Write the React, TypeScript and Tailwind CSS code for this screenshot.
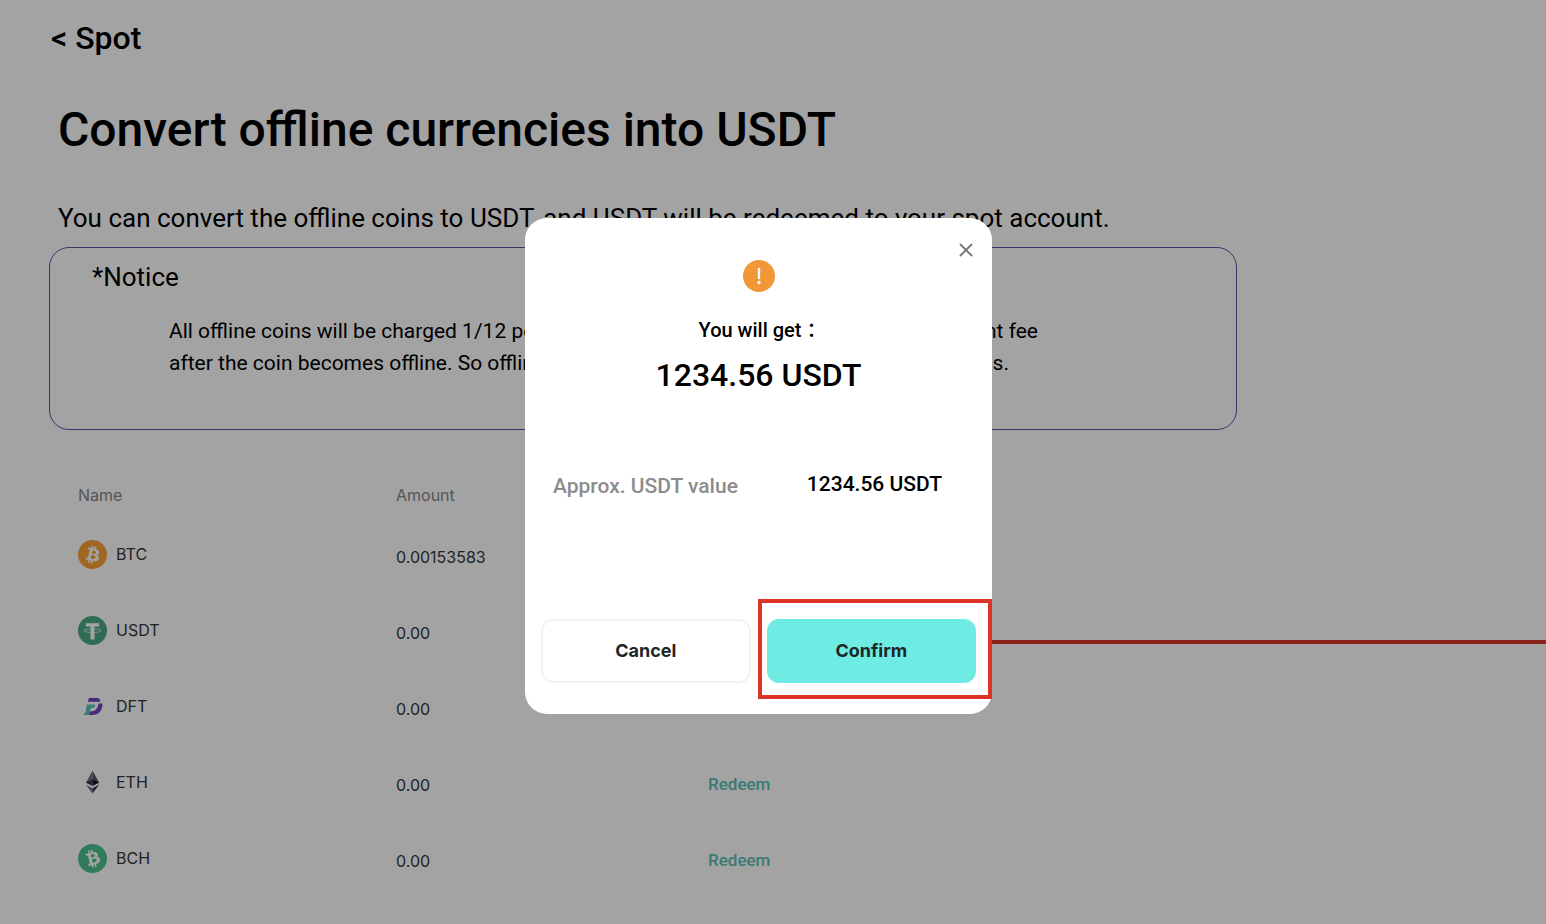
import React, { useState } from 'react';
import { X } from 'lucide-react';

const BITCOIN_PATH =
  'M23.2 14.1c.3-2.1-1.3-3.3-3.5-4l.7-2.9-1.7-.4-.7 2.8-1.4-.3.7-2.8-1.7-.5-.7 2.9-1.1-.3-2.4-.6-.4 1.9s1.2.3 1.2.3c.7.2.9.6.8 1l-2 8c-.1.2-.3.5-.8.4l-1.2-.3-.9 2 2.3.5 1.2.3-.7 2.9 1.8.5.7-2.9 1.4.3-.7 2.9 1.7.4.8-2.9c3 .6 5.2.3 6.1-2.4.8-2.1 0-3.4-1.5-4.2 1.1-.2 2-1 2.2-2.5zm-3.9 5.5c-.6 2.2-4.3 1-5.4.7l1-3.9c1.2.3 5 .9 4.4 3.2zm.6-5.5c-.5 2-3.6 1-4.6.7l.9-3.5c1 .2 4.2.7 3.7 2.8z';

const BtcIcon = () => (
  <svg className="h-[29px] w-[29px]" viewBox="0 0 32 32">
    <circle cx="16" cy="16" r="16" fill="#f9a039" />
    <path fill="#fff" d={BITCOIN_PATH} />
  </svg>
);

const UsdtIcon = () => (
  <svg className="h-[29px] w-[29px]" viewBox="0 0 32 32">
    <circle cx="16" cy="16" r="16" fill="#4ba883" />
    <path fill="#fff" d="M8.6 8h14.8v3.6h-5.2V26h-4.4V11.6H8.6z" />
    <path
      d="M13.5 14.3c-4 .2-7 1-7 1.9 0 1.1 4.2 2 9.5 2s9.5-.9 9.5-2c0-.9-3-1.7-7-1.9"
      fill="none"
      stroke="#fff"
      strokeWidth="0.8"
    />
  </svg>
);

const DftIcon = () => (
  <svg className="h-[29px] w-[29px]" viewBox="0 0 29 29">
    <path fill="#7044bd" d="M11 6h8.5c1.8 0 2.6 1.5 2.8 3.8H9.8z" />
    <path fill="#7044bd" d="M20.5 11.500h4c0 7-3.600 11.500-11 11.500h-2.800l1.200-3.800h2c4 0 5.800-3 6.600-7.700z" />
    <path fill="#53c6c0" d="M8.8 12.6h8.5l-1 3.1h-3.2L10.700 23H5.5l2.200-3.200z" />
  </svg>
);

const EthIcon = () => (
  <svg className="h-[29px] w-[29px]" viewBox="0 0 29 29">
    <path fill="#77728c" d="M14.5 2.5v10.2L7.8 15z" />
    <path fill="#5b5570" d="M14.5 2.5v10.2l6.8 2.3z" />
    <path fill="#3b354d" d="M14.5 11.3V18l-6.700-3.500z" />
    <path fill="#1f1a30" d="M14.5 11.3V18l6.800-3.500z" />
    <path fill="#77728c" d="M7.8 16.5l6.7 3.700v5.300z" />
    <path fill="#3b354d" d="M21.3 16.5l-6.800 3.700v5.300z" />
  </svg>
);

const BchIcon = () => (
  <svg className="h-[29px] w-[29px]" viewBox="0 0 32 32">
    <circle cx="16" cy="16" r="16" fill="#4cc08d" />
    <path fill="#fff" d={BITCOIN_PATH} transform="rotate(-28 16 16)" />
  </svg>
);

const coins = [
  { name: 'BTC', amount: '0.00153583', icon: <BtcIcon /> },
  { name: 'USDT', amount: '0.00', icon: <UsdtIcon /> },
  { name: 'DFT', amount: '0.00', icon: <DftIcon /> },
  { name: 'ETH', amount: '0.00', icon: <EthIcon /> },
  { name: 'BCH', amount: '0.00', icon: <BchIcon /> },
];

const ConfirmModal = ({ onClose }: { onClose: () => void }) => (
  <div className="fixed inset-0 z-50 flex items-start justify-center bg-black/36 pt-[218px] pr-[29px]">
    <div
      role="dialog"
      aria-modal="true"
      aria-labelledby="modal-title"
      className="relative w-full max-w-[467px] rounded-[22px] bg-white px-4 pt-[42px] pb-[31px]"
    >
      <button
        type="button"
        aria-label="Close"
        onClick={onClose}
        className="absolute top-[21px] right-[15px] text-[#777777]"
      >
        <X size={22} strokeWidth={2} />
      </button>

      <div className="flex flex-col items-center">
        <svg className="h-8 w-8" viewBox="0 0 32 32">
          <circle cx="16" cy="16" r="16" fill="#f19737" />
          <path d="M16 9v9" stroke="#fff" strokeWidth="2.4" strokeLinecap="round" />
          <circle cx="16" cy="22.5" r="1.7" fill="#fff" />
        </svg>
        <h2 id="modal-title" className="mt-6 pl-2 text-xl leading-7 font-medium">
          You will get ：
        </h2>
        <p className="mt-[11px] text-[32px] leading-10 font-medium">1234.56 USDT</p>
      </div>

      <div className="mt-[75px] flex items-start justify-between pr-[34px] pl-3 text-[21px] leading-7 font-medium">
        <span className="pt-0.5 text-[#8c8c8c]">Approx. USDT value</span>
        <span>1234.56 USDT</span>
      </div>

      <div className="mt-[119px] grid grid-cols-2 gap-4 font-[Inter,sans-serif] text-lg font-bold text-[#1f2626]">
        <button
          type="button"
          onClick={onClose}
          className="h-16 rounded-xl border-2 border-[#f2f2f2]"
        >
          Cancel
        </button>
        <div className="relative">
          <button type="button" onClick={onClose} className="h-16 w-full rounded-xl bg-[#6eebe3]">
            Confirm
          </button>
          <div className="pointer-events-none absolute -top-5 -right-4 -bottom-4 -left-[9px] border-4 border-[#dc3528]" />
        </div>
      </div>
    </div>
  </div>
);

const App = () => {
  const [open, setOpen] = useState(true);

  return (
    <div className="relative min-h-screen bg-white px-[49px] pt-[18px] font-[Roboto,'Noto_Sans_CJK_SC',sans-serif] text-black">
      <a href="#spot" className="block pl-0.5 text-[32px] leading-10 font-medium">
        &lt; Spot
      </a>

      <h1 className="mt-[42px] pl-[9px] text-5xl leading-[60px] font-medium">
        Convert offline currencies into USDT
      </h1>
      <p className="mt-10 pl-[9px] text-[26px] leading-9">
        You can convert the offline coins to USDT, and USDT will be redeemed to your spot account.
      </p>

      <section className="mt-[11px] max-w-[1188px] rounded-[20px] border border-[#5d52a3] pt-[11px] pb-[50px]">
        <h2 className="pl-[42px] text-[26px] leading-9">*Notice</h2>
        <p className="mt-5 pl-[119px] text-[21px] leading-8">
          All offline coins will be charged 1/12 per month of the total amount as asset management fee
          <br />
          after the coin becomes offline. So offline coins must be redeemed to avoid fee deductions.
        </p>
      </section>

      <table className="mt-11 ml-[29px] w-full max-w-[900px] table-fixed text-left font-[Inter,sans-serif] text-base">
        <thead>
          <tr className="h-[42px] text-[#858585]">
            <th className="w-[318px] font-normal">Name</th>
            <th className="w-[312px] font-normal">Amount</th>
            <th aria-label="Action" />
          </tr>
        </thead>
        <tbody>
          {coins.map((coin) => (
            <tr key={coin.name} className="h-[76px] text-[#343737]">
              <td>
                <div className="flex items-center gap-[9px]">
                  {coin.icon}
                  <span>{coin.name}</span>
                </div>
              </td>
              <td className="pt-1.5">{coin.amount}</td>
              <td className="pt-1.5">
                <button
                  type="button"
                  onClick={() => setOpen(true)}
                  className="font-[Roboto,sans-serif] text-[17px] font-medium text-[#58c1b3]"
                >
                  Redeem
                </button>
              </td>
            </tr>
          ))}
        </tbody>
      </table>

      {/* callout line leading away from the confirm button */}
      <div className="absolute top-[640px] right-0 left-1/2 h-1 bg-[#dc3528]" />

      {open && <ConfirmModal onClose={() => setOpen(false)} />}
    </div>
  );
};

export default App;
